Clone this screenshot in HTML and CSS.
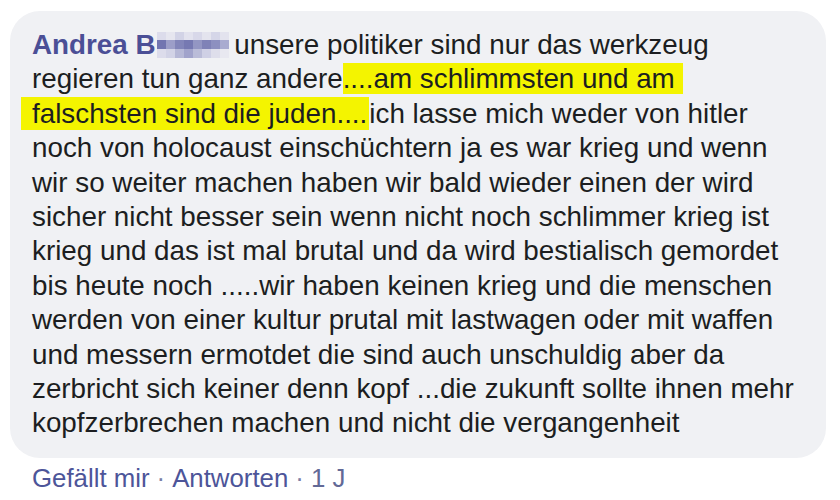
FILE: index.html
```html
<!DOCTYPE html>
<html lang="de">
<head>
<meta charset="utf-8">
<title>Kommentar</title>
<link rel="stylesheet" href="styles.css">
</head>
<body>
<div class="comment">
  <div class="bubble">
    <p class="text"><a class="author">Andrea B<svg class="blur" width="72" height="26" viewBox="0 0 72 26" aria-hidden="true">
      <rect x="0" y="0" width="72" height="26" fill="#f0f1f4"/>
      <rect x="0" y="0" width="9" height="8" fill="#dcdceb"/>
      <rect x="9" y="0" width="9" height="8" fill="#e6e6ef"/>
      <rect x="18" y="0" width="9" height="8" fill="#d2d3e6"/>
      <rect x="27" y="0" width="9" height="8" fill="#e2e2ee"/>
      <rect x="36" y="0" width="9" height="8" fill="#d8d8e9"/>
      <rect x="45" y="0" width="9" height="8" fill="#e4e4ee"/>
      <rect x="54" y="0" width="9" height="8" fill="#d5d6e8"/>
      <rect x="63" y="0" width="9" height="8" fill="#e3e3ee"/>
      <rect x="0" y="8" width="9" height="9" fill="#7275b0"/>
      <rect x="9" y="8" width="9" height="9" fill="#9c9ec8"/>
      <rect x="18" y="8" width="9" height="9" fill="#8285b9"/>
      <rect x="27" y="8" width="9" height="9" fill="#7679b2"/>
      <rect x="36" y="8" width="9" height="9" fill="#9396c3"/>
      <rect x="45" y="8" width="9" height="9" fill="#7f82b7"/>
      <rect x="54" y="8" width="9" height="9" fill="#8d90c0"/>
      <rect x="63" y="8" width="9" height="9" fill="#a9abd0"/>
      <rect x="0" y="17" width="9" height="9" fill="#dcdceb"/>
      <rect x="9" y="17" width="9" height="9" fill="#d2d3e6"/>
      <rect x="18" y="17" width="9" height="9" fill="#b6b8d6"/>
      <rect x="27" y="17" width="9" height="9" fill="#a1a3cb"/>
      <rect x="36" y="17" width="9" height="9" fill="#babcd8"/>
      <rect x="45" y="17" width="9" height="9" fill="#cfd0e5"/>
      <rect x="54" y="17" width="9" height="9" fill="#dedeeb"/>
      <rect x="63" y="17" width="9" height="9" fill="#e8e8f0"/>
    </svg></a> unsere politiker sind nur das werkzeug regieren tun ganz andere<mark class="hl hl-a">....am schlimmsten und am</mark> <mark class="hl hl-b">falschsten sind die juden....</mark>ich lasse mich weder von hitler noch von holocaust einschüchtern ja es war krieg und wenn wir so weiter machen haben wir bald wieder einen der wird sicher nicht besser sein wenn nicht noch schlimmer krieg ist krieg und das ist mal brutal und da wird bestialisch gemordet bis heute noch .....wir haben keinen krieg und die menschen werden von einer kultur prutal mit lastwagen oder mit waffen und messern ermotdet die sind auch unschuldig aber da zerbricht sich keiner denn kopf ...die zukunft sollte ihnen mehr kopfzerbrechen machen und nicht die vergangenheit</p>
  </div>
  <div class="actions">
    <a class="action">Gefällt mir</a><span class="dot">·</span><a class="action">Antworten</a><span class="dot">·</span><span class="time">1 J</span>
  </div>
</div>
</body>
</html>
```
FILE: styles.css
```css
html, body {
  margin: 0;
  padding: 0;
  background: #ffffff;
}

body {
  font-family: "Liberation Sans", Arial, sans-serif;
  color: #1c1e21;
}

.comment {
  padding: 11px 0 0 10px;
  width: 816px;
}

.bubble {
  background: #f0f1f4;
  border-radius: 30px;
  padding: 17px 20px 17px 22px;
}

.text {
  margin: 0;
  font-size: 27.8px;
  line-height: 34.4px;
}

.author {
  font-weight: bold;
  color: #4b4f96;
}

.blur {
  display: inline-block;
  vertical-align: -4px;
  margin-left: 1px;
  margin-right: -2px;
}

.hl {
  background: #f4f400;
  color: inherit;
}

.hl-a {
  padding-right: 8px;
}

.hl-b {
  margin-left: -11px;
  padding: 1px 2px 1px 11px;
}

.actions {
  display: flex;
  align-items: baseline;
  padding: 5px 0 0 22px;
  font-size: 25.8px;
  line-height: 31px;
  color: #4d5599;
}

.dot {
  padding: 0 7px;
  color: #7b80a6;
}

.time {
  color: #626996;
}
```
